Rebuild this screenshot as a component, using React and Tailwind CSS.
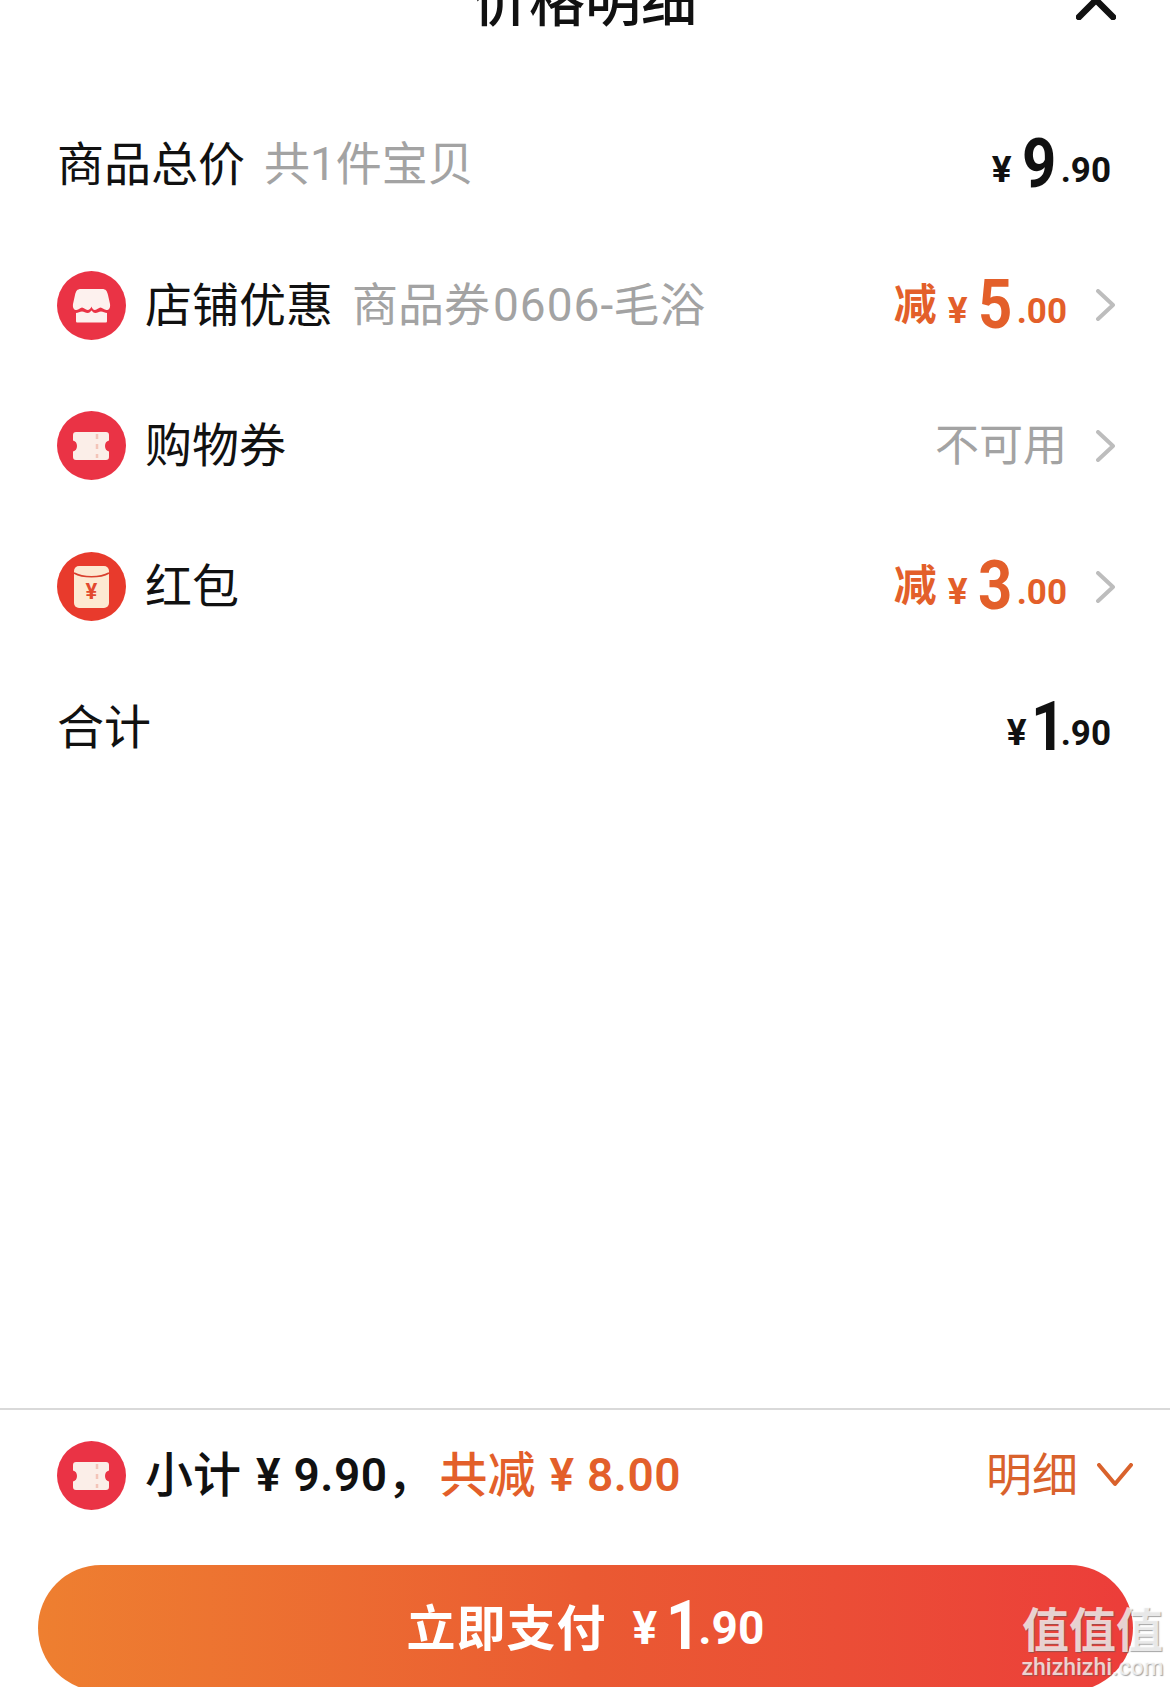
const cjk = "font-['Noto_Sans_CJK_SC','Noto_Sans',sans-serif]";
const num = "font-['Roboto','Noto_Sans_CJK_SC',sans-serif]";

const ShopIcon = () => (
	<svg viewBox="0 0 69 69" className="w-[69px] h-[69px] shrink-0">
		<circle cx="34.5" cy="34.5" r="34.5" fill="#ea3345" />
		<path
			d="M24 18 H45 C49 18 50 20 51 24 L53 33 C53.5 37 52 39 49.5 39 C47 39 45.5 36.5 43.5 36.5 C41.5 36.5 40 39 38 39 C36 39 35 37 34.5 35.5 C34 37 32.5 39 30.5 39 C28.5 39 27 36.5 25 36.5 C23 36.5 22 39 19.5 39 C17 39 15.5 37 16 33 L18 24 C19 20 20 18 24 18 Z"
			fill="#fdf1ee"
		/>
		<path
			d="M19 42 C21 42 23 40.5 25 40.5 C27 40.5 28.5 42 30.5 42 C32.5 42 33.5 40.5 34.5 39.5 C35.5 40.5 36.5 42 38.5 42 C40.5 42 42 40.5 44 40.5 C46 40.5 48 42 50 42 V50 C50 51 49.5 51.5 48.5 51.5 H20.5 C19.5 51.5 19 51 19 50 Z"
			fill="#fdf1ee"
		/>
	</svg>
);

const TicketIcon = () => (
	<svg viewBox="0 0 69 69" className="w-[69px] h-[69px] shrink-0">
		<circle cx="34.5" cy="34.5" r="34.5" fill="#ea3345" />
		<path
			d="M19 21 H49 C51 21 52 22 52 24 V29.5 C49.5 30 48 32 48 35 C48 38 49.5 40 52 40.5 V46 C52 48 51 49 49 49 H19 C17 49 16 48 16 46 V40.5 C18.5 40 20 38 20 35 C20 32 18.5 30 16 29.5 V24 C16 22 17 21 19 21 Z"
			fill="#fbeee8"
		/>
		<path d="M40 23 V47" stroke="#f3c4b8" strokeWidth="2.5" strokeDasharray="5 5" />
	</svg>
);

const RedPacketIcon = () => (
	<svg viewBox="0 0 69 69" className="w-[69px] h-[69px] shrink-0">
		<circle cx="34.5" cy="34.5" r="34.5" fill="#e83a2c" />
		<rect x="17" y="14" width="35" height="42" rx="5" fill="#fde9d2" />
		<path d="M17 21 C26 26 43 26 52 21" fill="none" stroke="#d9402e" strokeWidth="1.6" />
		<text
			x="34.5"
			y="47"
			textAnchor="middle"
			fontSize="22"
			fontWeight="700"
			fill="#e2492f"
			fontFamily="Roboto, sans-serif">
			¥
		</text>
	</svg>
);

const Chevron = () => (
	<svg viewBox="0 0 19 32" className="w-[19px] h-[32px]">
		<path d="M2 2 L17 16 L2 30" fill="none" stroke="#bdbdbd" strokeWidth="4" strokeLinecap="round" strokeLinejoin="round" />
	</svg>
);

// big digit is squeezed with scale-x, the negative margin gives the width back
const Price = ({ int, dec, color = "text-[#111111]", large = false }) => (
	<span className={`flex items-baseline font-bold mt-[4px] ${num} ${color}`}>
		<span className={`-translate-y-[5px] ${large ? "text-[46px] mr-[12px]" : "text-[37px] mr-[10px]"}`}>¥</span>
		<span
			className={`inline-block origin-left scale-x-[0.88] text-[68px] leading-none ${
				large ? "ml-[-3px] mr-[-12px]" : int === "1" ? "ml-[-6px] mr-[-14px]" : "mr-[-5px]"
			}`}>
			{int}
		</span>
		<span className={`-translate-y-[5px] ml-[5px] ${large ? "text-[46px]" : "text-[35px]"}`}>{dec}</span>
	</span>
);

const orange = "text-[#e35f2a]";

const Row = ({ icon, title, sub, children }) => (
	<div className="h-[140.75px] shrink-0 flex items-center justify-between pl-[57px] pr-[55px]">
		<div className="flex items-center">
			{icon && <span className="mr-[19px]">{icon}</span>}
			<span className="text-[47px] text-[#111111] leading-none mb-[8px]">{title}</span>
			{sub && <span className={`text-[46px] text-[#a3a3a3] leading-none ml-[19px] ${num}`}>{sub}</span>}
		</div>
		{children}
	</div>
);

const Discount = ({ int }) => (
	<div className="flex items-center">
		<span className={`text-[43px] font-bold ${orange} mr-[11px] leading-none mb-[8px]`}>减</span>
		<Price int={int} dec=".00" color={orange} />
		<span className="ml-[29px] flex"><Chevron /></span>
	</div>
);

export default function App() {
	return (
		<div className={`${cjk} relative w-[1170px] h-[1687px] overflow-hidden bg-white flex flex-col`}>
			{/* Header, cut by the top of the screenshot */}
			<div className="h-[94px] shrink-0 grid grid-cols-[1fr_auto_1fr] px-[54px]">
				<span />
				<h2 className="text-[56px] font-medium text-[#111111] leading-[56px] mt-[-31px]">价格明细</h2>
				<svg viewBox="0 0 40 40" className="w-[40px] h-[40px] justify-self-end mt-[-20px]">
					<path d="M3 3 L37 37 M37 3 L3 37" stroke="#111111" strokeWidth="6.5" strokeLinecap="round" />
				</svg>
			</div>

			<Row title="商品总价" sub="共1件宝贝">
				<span className="mr-[4px]"><Price int="9" dec=".90" /></span>
			</Row>
			<Row
				icon={<ShopIcon />}
				title="店铺优惠"
				sub={
					<>
						商品券<span className="ml-[3px] tracking-[1px]">0606</span>-毛浴
					</>
				}>
				<Discount int="5" />
			</Row>
			<Row icon={<TicketIcon />} title="购物券">
				<div className="flex items-center">
					<span className="text-[44px] text-[#a3a3a3] leading-none mb-[8px]">不可用</span>
					<span className="ml-[29px] flex"><Chevron /></span>
				</div>
			</Row>
			<Row icon={<RedPacketIcon />} title="红包">
				<Discount int="3" />
			</Row>
			<Row title="合计">
				<span className="mr-[4px]"><Price int="1" dec=".90" /></span>
			</Row>

			<div className="flex-1" />

			{/* Footer */}
			<div className="border-t-2 border-[#d9d9d9] h-[157px] shrink-0 flex items-center justify-between pl-[57px] pr-[37px] pb-[25px]">
				<div className="flex items-center">
					<span className="mr-[19px]"><TicketIcon /></span>
					<span className="text-[48px] font-medium text-[#111111] leading-none mb-[8px]">小计</span>
					<span className={`${num} text-[46px] font-semibold text-[#111111] ml-[15px]`}>¥</span>
					<span className={`${num} text-[46px] font-semibold text-[#111111] ml-[13px] tracking-[0.5px]`}>9.90</span>
					<span className="text-[47px] font-medium text-[#111111] leading-none mb-[8px] w-[52px]">，</span>
					<span className={`text-[48px] font-medium ${orange} leading-none mb-[8px]`}>共减</span>
					<span className={`${num} text-[46px] font-semibold ${orange} ml-[14px]`}>¥</span>
					<span className={`${num} text-[46px] font-semibold ${orange} ml-[13px] tracking-[0.5px]`}>8.00</span>
				</div>
				<div className="flex items-center">
					<span className="text-[46px] text-[#d9622c] leading-none mb-[8px]">明细</span>
					<svg viewBox="0 0 36 24" className="w-[36px] h-[24px] ml-[19px]">
						<path d="M2 2 L18 21 L34 2" fill="none" stroke="#d9622c" strokeWidth="4" strokeLinecap="round" strokeLinejoin="round" />
					</svg>
				</div>
			</div>

			<div className="h-[122px] shrink-0 pl-[38px] pr-[37px]">
				<div className="h-[126px] rounded-[63px] bg-gradient-to-r from-[#ee7f30] via-[#ea5a32] to-[#ec3d3a] flex items-center justify-center text-white">
					<span className="text-[49px] font-bold leading-none tracking-[1px] mr-[26px] mb-[8px]">立即支付</span>
					<Price int="1" dec=".90" color="text-white" large />
				</div>
			</div>

			{/* Site watermark */}
			<div className="absolute left-[1020px] top-[1598px] w-[145px] flex flex-col items-center text-white/75 [text-shadow:1px_1px_1px_rgba(90,90,90,0.55)]">
				<span className="text-[47px] font-bold leading-[58px] whitespace-nowrap">值值值</span>
				<span className="font-['Roboto',sans-serif] font-medium text-[23px] leading-[24px]">zhizhizhi.com</span>
			</div>
		</div>
	);
}
